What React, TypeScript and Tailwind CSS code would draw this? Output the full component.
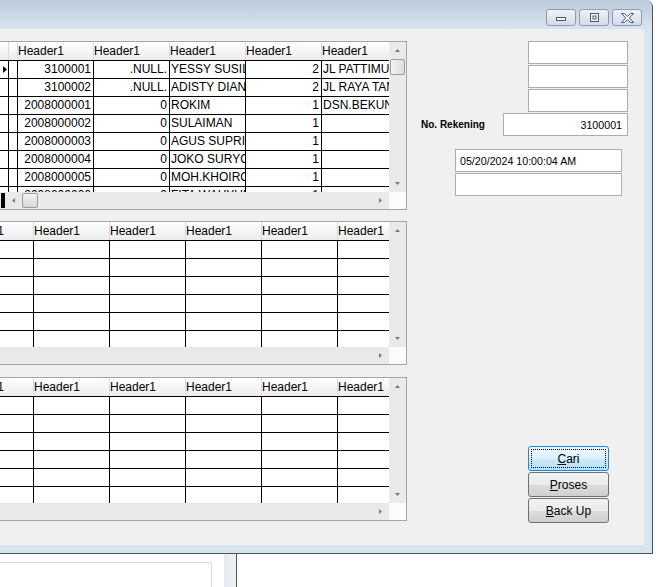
import React from "react"

interface Rec {
  mark?: boolean
  id: string
  kode: string
  nama: string
  jml: string
  alamat: string
}

const records: Rec[] = [
  { mark: true, id: "3100001", kode: ".NULL.", nama: "YESSY SUSILOWATI", jml: "2", alamat: "JL PATTIMURA" },
  { id: "3100002", kode: ".NULL.", nama: "ADISTY DIANA", jml: "2", alamat: "JL RAYA TAMAN" },
  { id: "2008000001", kode: "0", nama: "ROKIM", jml: "1", alamat: "DSN.BEKUNG" },
  { id: "2008000002", kode: "0", nama: "SULAIMAN", jml: "1", alamat: "" },
  { id: "2008000003", kode: "0", nama: "AGUS SUPRIYANTO", jml: "1", alamat: "" },
  { id: "2008000004", kode: "0", nama: "JOKO SURYONO", jml: "1", alamat: "" },
  { id: "2008000005", kode: "0", nama: "MOH.KHOIRON", jml: "1", alamat: "" },
  { id: "2008000006", kode: "0", nama: "FITA WAHYUNI", jml: "1", alamat: "" },
]

const Arrow = ({ dir }: { dir: "up" | "down" | "left" | "right" }) => {
  const vertical = dir === "up" || dir === "down"
  const pts = {
    up: "0,3 2.5,0 5,3",
    down: "0,0 5,0 2.5,3",
    left: "3,0 3,5 0,2.5",
    right: "0,0 3,2.5 0,5",
  }[dir]
  return (
    <svg width={vertical ? 5 : 3} height={vertical ? 3 : 5} viewBox={vertical ? "0 0 5 3" : "0 0 3 5"}>
      <polygon points={pts} fill="#7c7c7c" />
    </svg>
  )
}

const VScroll = ({ thumb }: { thumb?: boolean }) => (
  <div className="flex w-[17px] shrink-0 flex-col bg-[#eaeaea]">
    <div className="flex h-[17px] items-center justify-center">
      <Arrow dir="up" />
    </div>
    {thumb && (
      <div className="mx-[1px] h-[16px] rounded-[2px] border border-[#9b9b9b] bg-gradient-to-r from-[#f4f4f4] to-[#dcdcdc]" />
    )}
    <div className="flex-1" />
    <div className="flex h-[17px] items-center justify-center">
      <Arrow dir="down" />
    </div>
  </div>
)

const HScroll = ({ start }: { start?: boolean }) => (
  <div className="flex h-[17px]">
    <div className="flex w-[389px] items-center bg-[#eaeaea]">
      {start && (
        <>
          <div className="my-[1px] ml-[1px] w-[4px] self-stretch bg-black" />
          <div className="flex w-[17px] items-center justify-center">
            <Arrow dir="left" />
          </div>
          <div className="h-[15px] w-[16px] rounded-[2px] border border-[#9b9b9b] bg-gradient-to-b from-[#f4f4f4] to-[#d8d8d8]" />
        </>
      )}
      <div className="flex-1" />
      <div className="flex w-[17px] items-center justify-center">
        <Arrow dir="right" />
      </div>
    </div>
    <div className="w-[17px] bg-[#fbfbfb]" />
  </div>
)

const HeaderCell = () => (
  <div className="w-[76px] shrink-0 overflow-hidden whitespace-nowrap border-r border-[#dadada] leading-[18px]">
    Header1
  </div>
)

const Cell = ({ children, right }: { children?: React.ReactNode; right?: boolean }) => (
  <div
    className={
      right
        ? "w-[76px] shrink-0 overflow-hidden whitespace-nowrap border-r border-black pr-[2px] text-right leading-[17px]"
        : "w-[76px] shrink-0 overflow-hidden whitespace-nowrap border-r border-black pl-[1px] leading-[17px]"
    }
  >
    {children}
  </div>
)

const DataGrid = () => (
  <div className="flex h-[169px] w-[407px] flex-col border-y border-r border-[#a5a5a5]">
    <div className="flex h-[150px]">
      <div className="w-[389px] overflow-hidden bg-white">
        <div className="flex h-[19px] border-b border-black bg-gradient-to-b from-white to-[#ececec]">
          <div className="w-[9px] shrink-0 border-r border-[#dadada]" />
          <div className="w-[9px] shrink-0 border-r border-[#dadada]" />
          <HeaderCell />
          <HeaderCell />
          <HeaderCell />
          <HeaderCell />
          <HeaderCell />
        </div>
        {records.map((r) => (
          <div key={r.id} className="flex h-[18px] border-b border-black">
            <div className="flex w-[9px] shrink-0 items-center border-r border-black pl-[3px]">
              {r.mark && (
                <svg width="4" height="7" viewBox="0 0 4 7">
                  <polygon points="0,0 4,3.5 0,7" fill="#000" />
                </svg>
              )}
            </div>
            <div className="w-[9px] shrink-0 border-r border-black" />
            <Cell right>{r.id}</Cell>
            <Cell right>{r.kode}</Cell>
            <Cell>{r.nama}</Cell>
            <Cell right>{r.jml}</Cell>
            <Cell>{r.alamat}</Cell>
          </div>
        ))}
      </div>
      <VScroll thumb />
    </div>
    <HScroll start />
  </div>
)

const EmptyGrid = () => (
  <div className="flex h-[144px] w-[407px] flex-col border-y border-r border-[#a5a5a5]">
    <div className="flex h-[125px]">
      <div className="w-[389px] overflow-hidden bg-white">
        <div className="-ml-[42px] w-max">
          <div className="flex h-[19px] border-b border-black bg-gradient-to-b from-white to-[#ececec]">
            {[0, 1, 2, 3, 4, 5].map((i) => (
              <HeaderCell key={i} />
            ))}
          </div>
          {[0, 1, 2, 3, 4, 5].map((r) => (
            <div key={r} className="flex h-[18px] border-b border-black">
              {[0, 1, 2, 3, 4, 5].map((i) => (
                <Cell key={i} />
              ))}
            </div>
          ))}
        </div>
      </div>
      <VScroll />
    </div>
    <HScroll />
  </div>
)

const TextBox = ({ className, children }: { className: string; children?: React.ReactNode }) => (
  <div className={"flex h-[23px] items-center border border-[#abadb3] bg-white text-[10.67px] " + className}>
    {children}
  </div>
)

const Button = ({ hot, rest, focused }: { hot: string; rest: string; focused?: boolean }) =>
  focused ? (
    <div className="flex h-[25px] w-[81px] rounded-[3px] border border-[#3c7fb1] bg-[linear-gradient(to_bottom,#eaf6fd_0%,#dcf1fc_50%,#c9e9fa_51%,#b7e0f7_100%)] p-[2px]">
      <div className="flex flex-1 items-center justify-center border border-dotted border-black text-[12px]">
        <span className="underline">{hot}</span>
        {rest}
      </div>
    </div>
  ) : (
    <div className="flex h-[25px] w-[81px] items-center justify-center rounded-[3px] border border-[#707070] bg-[linear-gradient(to_bottom,#f2f2f2_0%,#ebebeb_50%,#dddddd_51%,#cfcfcf_100%)] text-[12px]">
      <span className="underline">{hot}</span>
      {rest}
    </div>
  )

const CaptionButton = ({ children }: { children: React.ReactNode }) => (
  <div className="flex h-[17px] w-[30px] items-center justify-center rounded-[3px] border border-[#8d9cb0] bg-gradient-to-b from-[#eef2f7] to-[#d2dce8]">
    {children}
  </div>
)

export default function App() {
  return (
    <div className="h-[587px] w-[669px] overflow-hidden bg-white font-['Liberation_Sans',Arial,Helvetica,sans-serif] text-[12px] text-black">
      <div className="flex w-[653px] flex-col rounded-tr-[7px] border-b border-r border-[#4b5259] bg-[#d9e4f1]">
        <div className="flex h-[29px] items-start justify-end gap-[3px] rounded-tr-[7px] bg-gradient-to-b from-[#bccadb] to-[#d9e4f1] pr-[10px] pt-[9px]">
          <CaptionButton>
            <svg width="10" height="5" viewBox="0 0 10 5" className="mt-[4px]">
              <rect x="0.5" y="0.5" width="9" height="3" fill="#f6f8fb" stroke="#4e5a68" />
            </svg>
          </CaptionButton>
          <CaptionButton>
            <svg width="9" height="9" viewBox="0 0 9 9">
              <rect x="0.5" y="0.5" width="8" height="8" fill="#f6f8fb" stroke="#4e5a68" />
              <rect x="3" y="3" width="3" height="3" fill="none" stroke="#4e5a68" />
            </svg>
          </CaptionButton>
          <CaptionButton>
            <svg width="13" height="10" viewBox="0 0 13 10">
              <path
                d="M0.5 0.5 H3.5 L6.5 3.5 L9.5 0.5 H12.5 L8.3 5 L12.5 9.5 H9.5 L6.5 6.5 L3.5 9.5 H0.5 L4.7 5 Z"
                fill="#f6f8fb"
                stroke="#4e5a68"
              />
            </svg>
          </CaptionButton>
        </div>
        <div className="mb-[8px] mr-[8px] flex h-[516px] bg-[#f0f0f0]">
          <div className="flex w-[407px] shrink-0 flex-col pt-[12px]">
            <DataGrid />
            <div className="mt-[11px]">
              <EmptyGrid />
            </div>
            <div className="mt-[12px]">
              <EmptyGrid />
            </div>
          </div>
          <div className="flex flex-1 flex-col pt-[12px]">
            <TextBox className="ml-[121px] w-[100px]" />
            <TextBox className="ml-[121px] mt-[1px] w-[100px]" />
            <TextBox className="ml-[121px] mt-[1px] w-[100px]" />
            <div className="mt-[1px] flex items-center">
              <div className="ml-[14px] w-[82px] text-[10px] font-bold">No. Rekening</div>
              <TextBox className="w-[125px] justify-end pr-[5px]">3100001</TextBox>
            </div>
            <TextBox className="ml-[48px] mt-[13px] w-[167px] pl-[4px]">05/20/2024 10:00:04 AM</TextBox>
            <TextBox className="ml-[48px] mt-[1px] w-[167px]" />
            <div className="ml-[121px] mt-[250px] flex flex-col gap-[1px]">
              <Button focused hot="C" rest="ari" />
              <Button hot="P" rest="roses" />
              <Button hot="B" rest="ack Up" />
            </div>
          </div>
        </div>
      </div>
      <div className="flex h-[33px]">
        <div className="mt-[8px] w-[212px] rounded-tr-[3px] border-r border-t border-[#dadada]" />
        <div className="ml-[12px] w-[12px] bg-gradient-to-r from-[#e3eaf2] to-[#eef2f7]" />
        <div className="w-px bg-[#50565c]" />
      </div>
    </div>
  )
}
